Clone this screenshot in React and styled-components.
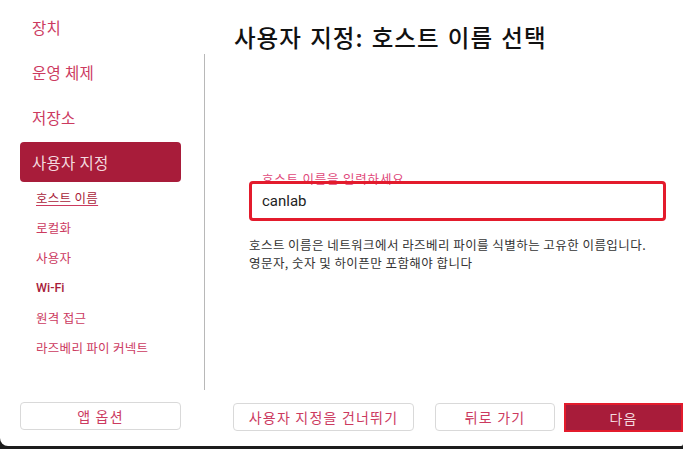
import React from "react";
import styled, { createGlobalStyle } from "styled-components";

const Global = createGlobalStyle`
  html, body { margin: 0; padding: 0; background: #1c1c1c; }
  body { font-family: Roboto, "Noto Sans CJK KR", sans-serif; }
  * { box-sizing: border-box; }
`;

const Window = styled.div`
  width: 683px;
  height: 446px;
  background: #ffffff;
  border-bottom-left-radius: 8px;
  border-bottom-right-radius: 2px;
  display: grid;
  grid-template-columns: 205px 1fr;
  grid-template-rows: 1fr 56px;
  overflow: hidden;
`;

const Sidebar = styled.nav`
  display: flex;
  flex-direction: column;
  padding: 0 24px 0 20px;
  border-right: 1px solid #b8b8b8;
  margin-top: 54px;
`;

const SidebarInner = styled.div`
  display: flex;
  flex-direction: column;
  margin-top: -47px;
`;

const NavItem = styled.div`
  height: 40px;
  margin-bottom: ${(p) => (p.$active ? 0 : 5)}px;
  display: flex;
  align-items: center;
  padding-left: 12px;
  border-radius: 4px;
  font-family: "Noto Sans CJK KR", sans-serif;
  font-size: 15.5px;
  letter-spacing: 0.3px;
  color: ${(p) => (p.$active ? "#f3d9df" : "#cc3a5f")};
  background: ${(p) => (p.$active ? "#a81c3a" : "transparent")};
  width: 161px;
`;

const SubItem = styled.div`
  height: 30px;
  display: flex;
  align-items: center;
  padding-left: 16px;
  font-family: ${(p) => (p.$latin ? "Roboto, sans-serif" : `"Noto Sans CJK KR", sans-serif`)};
  font-weight: ${(p) => (p.$latin ? 500 : 400)};
  font-size: 12.5px;
  letter-spacing: ${(p) => (p.$latin ? "0" : "0.3px")};
  color: ${(p) => (p.$latin ? "#a81c3a" : "#cc3a5f")};
  text-decoration: ${(p) => (p.$current ? "underline" : "none")};
  text-underline-offset: 2px;
  & > span { color: ${(p) => (p.$current ? "#a81c3a" : "inherit")}; }
`;

const Main = styled.main`
  display: flex;
  flex-direction: column;
  padding: 18px 17px 0 29px;
`;

const Title = styled.h1`
  margin: 0;
  font-family: "Noto Sans CJK KR", sans-serif;
  font-weight: 500;
  font-size: 23.5px;
  line-height: 38px;
  color: #111;
  letter-spacing: 1px;
  word-spacing: 2px;
`;

const Field = styled.div`
  margin: 125px 0 0 15px;
  position: relative;
`;

const Label = styled.label`
  position: absolute;
  left: 13px;
  top: -9px;
  font-family: "Noto Sans CJK KR", sans-serif;
  font-size: 12.5px;
  line-height: 14px;
  letter-spacing: 0.8px;
  color: #e0487a;
  z-index: 0;
`;

const Input = styled.div`
  position: relative;
  height: 40px;
  border: 3px solid #e31b2c;
  border-radius: 4px;
  display: flex;
  align-items: center;
  padding-left: 10px;
  font-family: Roboto, sans-serif;
  font-size: 15px;
  color: #222;
  z-index: 1;
`;

const Help = styled.p`
  margin: 15px 0 0 15px;
  font-family: "Noto Sans CJK KR", sans-serif;
  font-size: 12.5px;
  letter-spacing: 0.45px;
  line-height: 18px;
  color: #333;
`;

const Footer = styled.div`
  display: flex;
  align-items: flex-end;
  padding-bottom: 14px;
`;

const SideFooter = styled(Footer)`
  padding-left: 20px;
  padding-bottom: 15px;
`;

const MainFooter = styled(Footer)`
  padding-left: 28px;
`;

const Button = styled.button`
  height: ${(p) => (p.$primary ? 29 : 28)}px;
  width: ${(p) => p.$w}px;
  margin-right: ${(p) => p.$mr || 0}px;
  margin-bottom: ${(p) => (p.$primary ? 0 : 1)}px;
  border: ${(p) => (p.$primary ? "2px solid #e31b2c" : "1px solid #d9d9d9")};
  border-radius: ${(p) => (p.$primary ? "0" : "4px")};
  background: ${(p) => (p.$primary ? "#a81c3a" : "#fff")};
  color: ${(p) => (p.$primary ? "#f3d9df" : "#cc3a5f")};
  font-family: "Noto Sans CJK KR", sans-serif;
  font-size: 14px;
  letter-spacing: 1.2px;
  padding: 0;
  cursor: pointer;
`;

export default function App() {
  return (
    <>
      <Global />
      <Window>
        <Sidebar>
          <SidebarInner>
            <NavItem>장치</NavItem>
            <NavItem>운영 체제</NavItem>
            <NavItem>저장소</NavItem>
            <NavItem $active>사용자 지정</NavItem>
            <SubItem $current><span>호스트 이름</span></SubItem>
            <SubItem>로컬화</SubItem>
            <SubItem>사용자</SubItem>
            <SubItem $latin>Wi-Fi</SubItem>
            <SubItem>원격 접근</SubItem>
            <SubItem>라즈베리 파이 커넥트</SubItem>
          </SidebarInner>
        </Sidebar>
        <Main>
          <Title>사용자 지정: 호스트 이름 선택</Title>
          <Field>
            <Label>호스트 이름을 입력하세요</Label>
            <Input>canlab</Input>
          </Field>
          <Help>
            호스트 이름은 네트워크에서 라즈베리 파이를 식별하는 고유한 이름입니다.
            <br />
            영문자, 숫자 및 하이픈만 포함해야 합니다
          </Help>
        </Main>
        <SideFooter>
          <Button $w={161}>앱 옵션</Button>
        </SideFooter>
        <MainFooter>
          <Button $w={181} $mr={21}>사용자 지정을 건너뛰기</Button>
          <Button $w={120} $mr={9}>뒤로 가기</Button>
          <Button $w={119} $primary>다음</Button>
        </MainFooter>
      </Window>
    </>
  );
}
